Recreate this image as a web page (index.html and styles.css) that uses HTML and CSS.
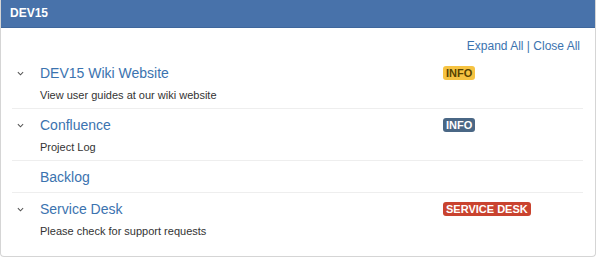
FILE: index.html
```html
<!DOCTYPE html>
<html>
<head>
  <link rel="stylesheet" href="styles.css">
</head>
<body>
  <div class="panel">
    <div class="panel-header">DEV15</div>
    <div class="panel-body">
      <div class="toggle-links">
        <a href="#">Expand All</a> | <a href="#">Close All</a>
      </div>

      <div class="link-row">
        <span class="chevron">
          <svg viewBox="0 0 8 5" fill="none" stroke="currentColor" stroke-width="1.2">
            <path d="M1 1l3 3 3-3"/>
          </svg>
        </span>
        <a class="link-title" href="#">DEV15 Wiki Website</a>
        <span class="lozenge lozenge-current">Info</span>
        <div class="link-desc">View user guides at our wiki website</div>
      </div>

      <div class="link-row">
        <span class="chevron">
          <svg viewBox="0 0 8 5" fill="none" stroke="currentColor" stroke-width="1.2">
            <path d="M1 1l3 3 3-3"/>
          </svg>
        </span>
        <a class="link-title" href="#">Confluence</a>
        <span class="lozenge lozenge-complete">Info</span>
        <div class="link-desc">Project Log</div>
      </div>

      <div class="link-row">
        <span class="chevron"></span>
        <a class="link-title" href="#">Backlog</a>
        <span></span>
      </div>

      <div class="link-row">
        <span class="chevron">
          <svg viewBox="0 0 8 5" fill="none" stroke="currentColor" stroke-width="1.2">
            <path d="M1 1l3 3 3-3"/>
          </svg>
        </span>
        <a class="link-title" href="#">Service Desk</a>
        <span class="lozenge lozenge-error">Service Desk</span>
        <div class="link-desc">Please check for support requests</div>
      </div>
    </div>
  </div>
</body>
</html>
```

FILE: styles.css
```css
body {
  margin: 0;
  background: #fff;
  font-family: "Liberation Sans", Arial, sans-serif;
  color: #333;
}
a {
  color: #3b73af;
  text-decoration: none;
}
.panel {
  width: 594px;
  border: 1px solid #d5d5d5;
  border-top: none;
  border-radius: 0 0 4px 4px;
}
.panel-header {
  height: 27px;
  line-height: 26px;
  padding-left: 9px;
  background: #4872aa;
  border-bottom: 1px solid #3f679c;
  color: #fff;
  font-size: 12px;
  font-weight: bold;
}
.panel-body {
  padding: 10px 12px 12px 11px;
}
.toggle-links {
  text-align: right;
  font-size: 12px;
  line-height: 16px;
  color: #3b73af;
  padding-right: 3px;
  margin-bottom: 3px;
}
.link-row {
  display: grid;
  grid-template-columns: 28px 403px auto;
  align-items: center;
  padding: 6px 0 5px;
  border-bottom: 1px solid #eee;
}
.link-row:last-child {
  border-bottom: none;
}
.chevron {
  display: flex;
  padding-left: 5px;
  color: #555;
}
.chevron svg {
  width: 7px;
  height: 5px;
}
.link-title {
  font-size: 14px;
  line-height: 20px;
}
.link-desc {
  grid-column: 2 / 4;
  margin-top: 4px;
  font-size: 11px;
  line-height: 16px;
  color: #333;
}
.lozenge {
  justify-self: start;
  padding: 1px 3px 1px;
  border-radius: 3px;
  font-size: 11px;
  font-weight: bold;
  line-height: 12px;
  text-transform: uppercase;
}
.lozenge-current {
  background: #f6c342;
  color: #594300;
}
.lozenge-complete {
  background: #4a6785;
  color: #fff;
}
.lozenge-error {
  background: #c9432f;
  color: #fff;
}
```
